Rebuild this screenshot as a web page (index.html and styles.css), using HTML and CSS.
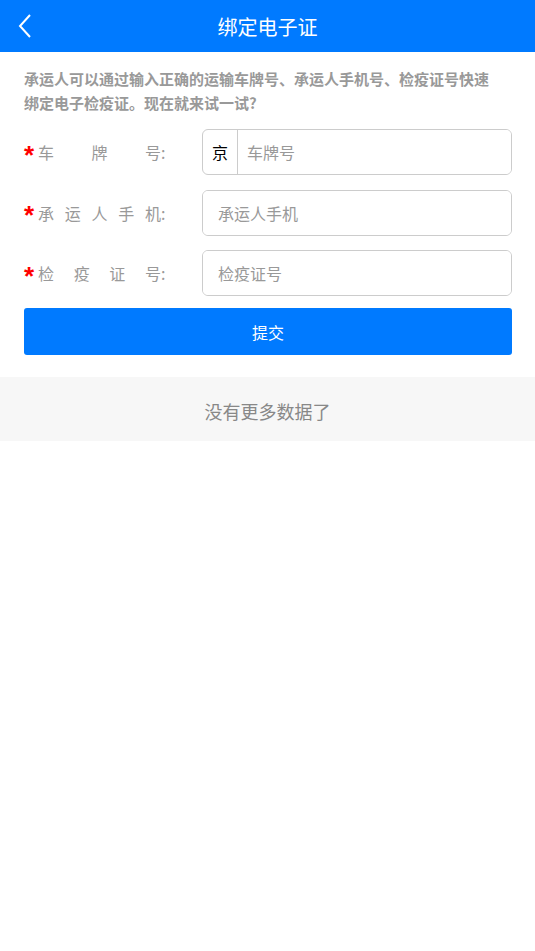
FILE: index.html
```html
<!DOCTYPE html>
<html lang="zh-CN">
<head>
	<meta charset="UTF-8">
	<title>绑定电子证</title>
	<link rel="stylesheet" href="styles.css">
</head>
<body>
	<div class="header">
		<a class="back" href="#">
			<svg width="14" height="24" viewBox="0 0 14 24"><path d="M12 1 L2 12 L12 23" fill="none" stroke="#fff" stroke-width="2"/></svg>
		</a>
		<h1>绑定电子证</h1>
	</div>
	<p class="intro">承运人可以通过输入正确的运输车牌号、承运人手机号、检疫证号快速绑定电子检疫证。现在就来试一试?</p>
	<form class="form">
		<div class="row">
			<label><i>*</i><span>车牌号</span>:</label>
			<div class="box">
				<span class="prov">京</span>
				<input type="text" placeholder="车牌号">
			</div>
		</div>
		<div class="row">
			<label><i>*</i><span>承运人手机</span>:</label>
			<div class="box">
				<input type="text" placeholder="承运人手机">
			</div>
		</div>
		<div class="row">
			<label><i>*</i><span>检疫证号</span>:</label>
			<div class="box">
				<input type="text" placeholder="检疫证号">
			</div>
		</div>
		<button type="button" class="submit">提交</button>
	</form>
	<div class="nomore">没有更多数据了</div>
</body>
</html>
```
FILE: styles.css
```css
* {box-sizing: border-box;}
body {margin: 0; font-family: "Noto Sans CJK SC", "Noto Sans", sans-serif; background: #fff;}
.header {height: 52px; background: #007aff; display: flex; align-items: center; justify-content: center; position: relative;}
.header h1 {margin: 0; font-size: 20px; font-weight: normal; color: #fff;}
.back {position: absolute; left: 18px; top: 14px; display: block; height: 24px;}
.intro {margin: 0; padding: 15px 40px 0 24px; font-size: 15px; line-height: 24px; font-weight: bold; color: #999;}
.form {padding: 14px 23px 0 24px;}
.row {display: flex; align-items: center; height: 46px; margin-bottom: 14.5px;}
.row label {width: 178px; font-size: 16px; color: #999; display: flex; align-items: center;}
.row label i {display: block; font-style: normal; font-weight: bold; color: #f00; font-family: "Liberation Sans", sans-serif; font-size: 26px; line-height: 26px; width: 14px; padding-top: 5px;}
.row label span {display: inline-block; width: 123px; text-align: justify; text-align-last: justify;}
.box {flex: 1; height: 46px; border: 1px solid #ccc; border-radius: 6px; display: flex; align-items: center; overflow: hidden;}
.prov {width: 35px; height: 100%; border-right: 1px solid #ccc; display: flex; align-items: center; justify-content: center; font-size: 16px; color: #000;}
.box input {flex: 1; border: 0; outline: 0; height: 100%; padding: 0 15px; font-size: 16px; font-family: inherit; color: #333;}
.prov + input {padding-left: 9px;}
.box input::placeholder {color: #999;}
.submit {display: block; width: 100%; height: 47px; margin-top: -2.5px; border: 0; border-radius: 3px; background: #007aff; color: #fff; font-size: 16px; font-family: inherit;}
.nomore {margin-top: 22px; height: 64px; padding-top: 4px; background: #f7f7f7; display: flex; align-items: center; justify-content: center; font-size: 18px; color: #888;}
```
